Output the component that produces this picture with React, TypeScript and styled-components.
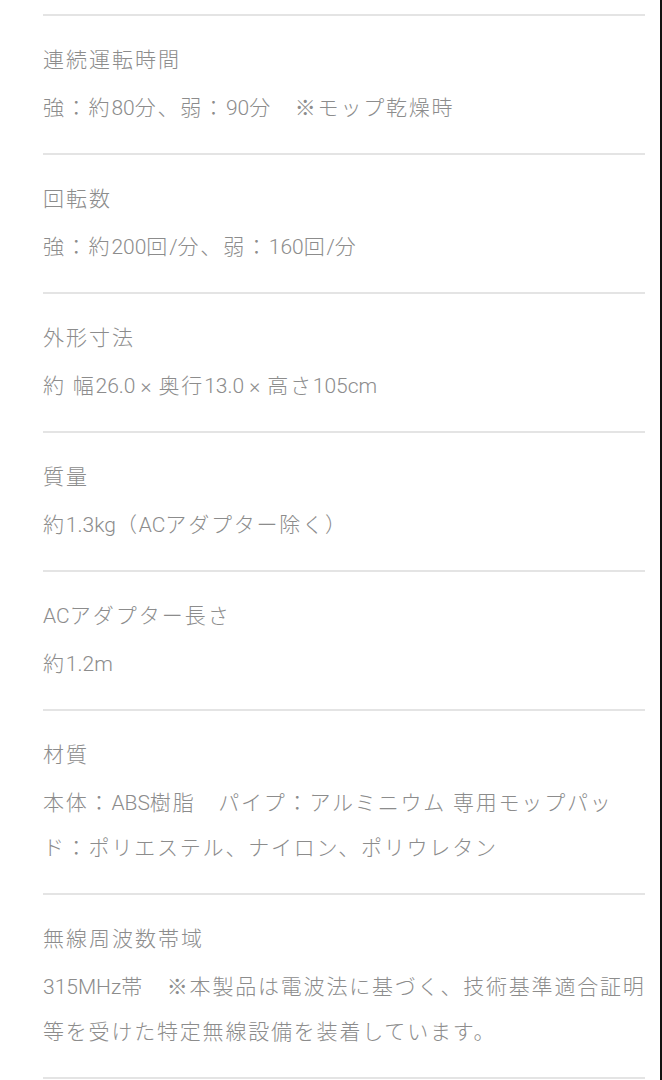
import React from 'react';
import styled, { createGlobalStyle } from 'styled-components';

const GlobalStyle = createGlobalStyle`
  html, body {
    margin: 0;
    padding: 0;
    background: #ffffff;
  }
  body {
    font-family: Roboto, "Noto Sans CJK JP", sans-serif;
  }
`;

interface ISpec {
  label: string;
  value: string;
}

const specs: ISpec[] = [
  { label: '連続運転時間', value: '強：約80分、弱：90分　※モップ乾燥時' },
  { label: '回転数', value: '強：約200回/分、弱：160回/分' },
  { label: '外形寸法', value: '約 幅26.0 × 奥行13.0 × 高さ105cm' },
  { label: '質量', value: '約1.3kg（ACアダプター除く）' },
  { label: 'ACアダプター長さ', value: '約1.2m' },
  {
    label: '材質',
    value: '本体：ABS樹脂　パイプ：アルミニウム 専用モップパッド：ポリエステル、ナイロン、ポリウレタン',
  },
  {
    label: '無線周波数帯域',
    value: '315MHz帯　※本製品は電波法に基づく、技術基準適合証明等を受けた特定無線設備を装着しています。',
  },
];

// -----------------------------------------------------------------------------
// Components
// -----------------------------------------------------------------------------
const Page = styled.div`
  width: 662px;
  min-height: 1080px;
  box-sizing: border-box;
  padding: 14px 15px 0 43px;
  border-right: 2px solid #111;
  background: #fff;
`;

const SpecList = styled.dl`
  margin: 0;
`;

const SpecRow = styled.div`
  border-top: 2px solid #e4e4e4;
  padding: 22px 0 22px;

  &:last-child {
    border-bottom: 2px solid #e4e4e4;
  }
`;

const SpecLabel = styled.dt`
  margin: 0 0 4px;
  font-size: 21px;
  font-weight: 300;
  line-height: 44px;
  letter-spacing: 2px;
  color: #8c8c8c;
`;

const SpecValue = styled.dd`
  margin: 0 -7px 0 0;
  font-size: 21px;
  font-weight: 300;
  line-height: 45px;
  letter-spacing: 1.8px;
  color: #8c8c8c;
  word-break: break-all;
`;

// latin runs are set tight, only the kana / kanji get the tracking
const Latin = styled.span`
  letter-spacing: 0;
`;

const Tracked = ({ text }: { text: string }): JSX.Element => (
  <>
    {text.split(/([A-Za-z0-9./×]+(?: [A-Za-z0-9./×]+)*)/).map((part, i) =>
      i % 2 === 1 ? <Latin key={i}>{part}</Latin> : part,
    )}
  </>
);

const App = (): JSX.Element => (
  <>
    <GlobalStyle />
    <Page>
      <SpecList>
        {specs.map((spec) => (
          <SpecRow key={spec.label}>
            <SpecLabel>
              <Tracked text={spec.label} />
            </SpecLabel>
            <SpecValue>
              <Tracked text={spec.value} />
            </SpecValue>
          </SpecRow>
        ))}
      </SpecList>
    </Page>
  </>
);

export default App;
